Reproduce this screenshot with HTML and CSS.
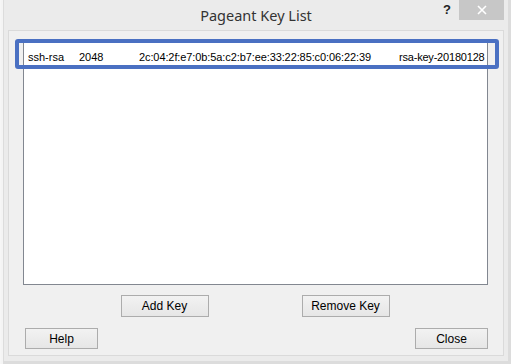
FILE: index.html
```html
<!DOCTYPE html>
<html lang="en">
<head>
    <meta charset="UTF-8">
    <title>Pageant Key List</title>
    <link rel="stylesheet" href="styles.css">
</head>
<body>
    <div class="window">
        <!-- Заголовок окна -->
        <div class="titlebar">
            <span class="title">Pageant Key List</span>
            <span class="help-btn">?</span>
            <span class="close-btn">
                <svg width="10" height="10" viewBox="0 0 10 10">
                    <path d="M1 1 L9 9 M9 1 L1 9" stroke="#fff" stroke-width="1.6"/>
                </svg>
            </span>
        </div>

        <!-- Клиентская область -->
        <div class="client">
            <div class="keylist">
                <div class="key-row">
                    <span class="col-type">ssh-rsa</span>
                    <span class="col-bits">2048</span>
                    <span class="col-fp">2c:04:2f:e7:0b:5a:c2:b7:ee:33:22:85:c0:06:22:39</span>
                    <span class="col-comment">rsa-key-20180128</span>
                </div>
            </div>

            <div class="key-buttons">
                <button>Add Key</button>
                <button>Remove Key</button>
            </div>

            <div class="bottom-buttons">
                <button>Help</button>
                <button>Close</button>
            </div>
        </div>

        <div class="highlight"></div>
    </div>
</body>
</html>
```

FILE: styles.css
```css
body {
    margin: 0;
    background-color: #ebebeb;
    font-family: "Liberation Sans", Arial, sans-serif;
}
.window {
    position: relative;
    width: 511px;
    height: 364px;
    box-sizing: border-box;
    padding: 0 7px 7px 7px;
    background-color: #ebebeb;
    border-left: 1px solid #f6f6f6;
    box-shadow: inset 2px 0 0 #f4f4f4, inset 3px 0 0 #dcdcdc, inset -3px 0 0 #dcdcdc, inset 0 -3px 0 #dcdcdc;
}
.titlebar {
    position: relative;
    height: 30px;
    display: flex;
    align-items: center;
    justify-content: center;
}
.title {
    font-family: "Noto Sans", sans-serif;
    font-size: 14.5px;
    color: #333;
    margin-top: -1px;
}
.help-btn {
    position: absolute;
    left: 435px;
    top: 2px;
    font-family: "Liberation Sans", Arial, sans-serif;
    font-weight: bold;
    font-size: 13px;
    color: #222;
}
.close-btn {
    position: absolute;
    left: 451px;
    top: 0;
    width: 45px;
    height: 20px;
    background-color: #c7c7c7;
    display: flex;
    align-items: center;
    justify-content: center;
}
.client {
    height: 326px;
    box-sizing: border-box;
    background-color: #f0f0f0;
    border: 1px solid #dadada;
    padding: 10px 15px 0 14px;
}
.keylist {
    height: 244px;
    box-sizing: border-box;
    background: white;
    border: 1px solid #828790;
    padding-top: 8px;
}
.key-row {
    display: flex;
    font-size: 11px;
    color: #000;
    line-height: 14px;
    padding-left: 4px;
    white-space: nowrap;
}
.col-type {
    width: 51px;
}
.col-bits {
    width: 60px;
}
.col-fp {
    width: 260px;
    letter-spacing: -0.1px;
}
.col-comment {
    letter-spacing: -0.2px;
}
button {
    font-family: "Liberation Sans", Arial, sans-serif;
    font-size: 12px;
    color: #000;
    background: linear-gradient(#f2f2f2, #e6e6e6);
    border: 1px solid #acacac;
    padding: 0;
}
.key-buttons {
    display: flex;
    justify-content: center;
    gap: 93px;
    margin-top: 10px;
    padding-right: 1px;
}
.key-buttons button {
    width: 88px;
    height: 22px;
}
.bottom-buttons {
    display: flex;
    justify-content: space-between;
    margin-top: 11px;
    padding-left: 2px;
}
.bottom-buttons button {
    width: 73px;
    height: 21px;
}
.highlight {
    position: absolute;
    left: 14px;
    top: 39px;
    width: 484px;
    height: 30px;
    box-sizing: border-box;
    border: 4px solid #4a70c2;
    border-radius: 3px;
}
```
